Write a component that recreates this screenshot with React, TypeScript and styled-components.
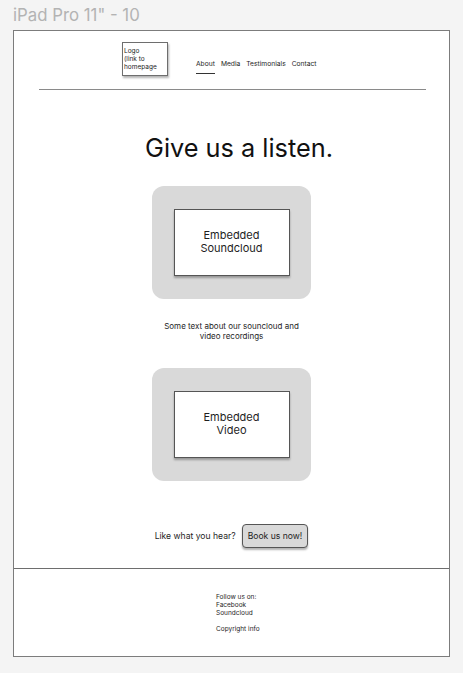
import styled, { createGlobalStyle } from "styled-components";

const GlobalStyle = createGlobalStyle`
    html, body {
        margin: 0;
        padding: 0;
        background: #f4f4f4;
        font-family: Inter, "Noto Sans", "Liberation Sans", sans-serif;
        color: #1e1e1e;
    }
`;

const Page = styled.div`
    width: 463px;
    height: 673px;
    padding: 0 13px;
    box-sizing: border-box;
    overflow: hidden;
`;

const FrameLabel = styled.div`
    height: 30px;
    display: flex;
    align-items: center;
    font-size: 16.8px;
    line-height: 17px;
    color: #b3b3b3;
    padding-top: 1px;
    box-sizing: border-box;
`;

const Frame = styled.div`
    width: 437px;
    height: 627px;
    box-sizing: border-box;
    background: #fff;
    border: 1px solid #7c7c7c;
    display: flex;
    flex-direction: column;
`;

const Header = styled.header`
    display: flex;
    align-items: flex-start;
    padding: 11px 0 0 108px;
`;

const LogoBox = styled.a`
    width: 46px;
    height: 34px;
    box-sizing: border-box;
    border: 1px solid #6e6e6e;
    box-shadow: 1px 2px 2px rgba(0, 0, 0, 0.3);
    padding: 4px 2px 4px 1px;
    font-size: 6.5px;
    line-height: 8px;
    color: #1e1e1e;
    text-decoration: none;
`;

const Nav = styled.nav`
    display: flex;
    gap: 6px;
    margin: 18px 0 0 28px;
`;

const NavLink = styled.a<{ $active?: boolean }>`
    font-size: 6.7px;
    line-height: 9px;
    color: #1e1e1e;
    text-decoration: none;
    padding-bottom: 4px;
    border-bottom: 1px solid ${(p) => (p.$active ? "#333" : "transparent")};
`;

const Divider = styled.hr`
    margin: 13px 0 0 25px;
    width: 387px;
    border: none;
    border-top: 1px solid #8a8a8a;
`;

const Main = styled.main`
    display: flex;
    flex-direction: column;
    align-items: center;
`;

const Title = styled.h1`
    margin: 42px 0 0 15px;
    font-size: 25.3px;
    line-height: 32px;
    font-weight: 400;
    color: #111;
`;

const EmbedCard = styled.div<{ $top: number }>`
    margin-top: ${(p) => p.$top}px;
    width: 159px;
    height: 113px;
    border-radius: 12px;
    background: #d9d9d9;
    display: flex;
    align-items: center;
    justify-content: center;
`;

const EmbedFrame = styled.div`
    width: 116px;
    height: 67px;
    box-sizing: border-box;
    padding-bottom: 1px;
    background: #fff;
    border: 1px solid #555;
    box-shadow: 0 2px 2px rgba(0, 0, 0, 0.3);
    display: flex;
    align-items: center;
    justify-content: center;
    text-align: center;
    font-size: 11px;
    line-height: 13px;
    color: #1e1e1e;
`;

const Blurb = styled.p`
    margin: 22px 0 0;
    font-size: 8px;
    line-height: 10px;
    text-align: center;
    color: #1e1e1e;
`;

const CallToAction = styled.div`
    margin-top: 43px;
    display: flex;
    align-items: center;
    gap: 6px;
    font-size: 8.6px;
    color: #1e1e1e;
`;

const BookButton = styled.button`
    height: 24px;
    padding: 0 5px;
    font-family: inherit;
    font-size: 8.6px;
    color: #1e1e1e;
    background: #d9d9d9;
    border: 1px solid #555;
    border-radius: 4px;
    box-shadow: 0 2px 2px rgba(0, 0, 0, 0.3);
`;

const Footer = styled.footer`
    margin-top: 20px;
    border-top: 1px solid #6e6e6e;
    padding: 24px 0 0 202px;
    font-size: 6.5px;
    line-height: 8px;
    color: #1e1e1e;
`;

const FooterGroup = styled.div`
    margin-bottom: 8px;
`;

export default function App() {
    return (
        <>
            <GlobalStyle />
            <Page>
                <FrameLabel>iPad Pro 11" - 10</FrameLabel>
                <Frame>
                    <Header>
                        <LogoBox href="#">
                            Logo
                            <br />
                            (link to
                            <br />
                            homepage
                        </LogoBox>
                        <Nav>
                            <NavLink href="#" $active>
                                About
                            </NavLink>
                            <NavLink href="#">Media</NavLink>
                            <NavLink href="#">Testimonials</NavLink>
                            <NavLink href="#">Contact</NavLink>
                        </Nav>
                    </Header>
                    <Divider />
                    <Main>
                        <Title>Give us a listen.</Title>
                        <EmbedCard $top={22}>
                            <EmbedFrame>
                                Embedded
                                <br />
                                Soundcloud
                            </EmbedFrame>
                        </EmbedCard>
                        <Blurb>
                            Some text about our souncloud and
                            <br />
                            video recordings
                        </Blurb>
                        <EmbedCard $top={27}>
                            <EmbedFrame>
                                Embedded
                                <br />
                                Video
                            </EmbedFrame>
                        </EmbedCard>
                        <CallToAction>
                            Like what you hear?
                            <BookButton>Book us now!</BookButton>
                        </CallToAction>
                    </Main>
                    <Footer>
                        <FooterGroup>
                            Follow us on:
                            <br />
                            Facebook
                            <br />
                            Soundcloud
                        </FooterGroup>
                        <FooterGroup>Copyright info</FooterGroup>
                    </Footer>
                </Frame>
            </Page>
        </>
    );
}
